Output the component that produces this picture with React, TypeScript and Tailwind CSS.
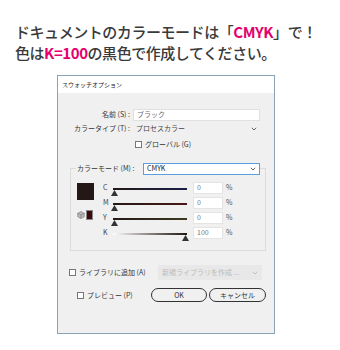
const jp = { fontFamily: '"Noto Sans CJK JP", "Noto Sans", sans-serif' };

const Check = () => (
  <span className="inline-block w-[7px] h-[7px] border border-[#777] bg-white mr-[3px]" />
);

const Chevron = ({ color = "#555" }: { color?: string }) => (
  <svg width="6" height="4" viewBox="0 0 6 4" className="shrink-0">
    <path d="M0.8 0.8 L3 3 L5.2 0.8" fill="none" stroke={color} strokeWidth="0.9" />
  </svg>
);

const Thumb = () => (
  <svg width="7" height="6" viewBox="0 0 7 6">
    <path d="M3.5 0 L7 6 L0 6 Z" fill="#333" />
  </svg>
);

const sliders = [
  { k: "C", v: "0", track: "bg-gradient-to-r from-[#231815] to-[#1b1f4a]", right: false },
  { k: "M", v: "0", track: "bg-gradient-to-r from-[#231815] to-[#4a1518]", right: false },
  { k: "Y", v: "0", track: "bg-gradient-to-r from-[#231815] to-[#3d3a22]", right: false },
  { k: "K", v: "100", track: "bg-gradient-to-r from-[#ffffff] to-[#231815]", right: true },
];

export default function App() {
  return (
    <div className="w-[340px] h-[350px] bg-white overflow-hidden" style={jp}>
      <div className="pt-[21px] pl-[15px] text-[15px] leading-[21px] font-medium text-[#3a3a3a] tracking-[-0.45px]">
        <div>
          ドキュメントのカラーモードは「<span className="text-[#e5006e] font-bold">CMYK</span>」で！
        </div>
        <div>
          色は<span className="text-[#e5006e] font-bold">K=100</span>の黒色で作成してください。
        </div>
      </div>

      <div className="ml-[57px] mt-[12px] w-[218px] h-[259px] border border-[#8aa3b5] bg-[#f0f0f0] text-[7px] text-[#333]">
        <div className="h-[17px] bg-white flex items-center px-[4px] text-[6px] text-[#222]">
          スウォッチオプション
        </div>

        <div className="pt-[15px]">
          <div className="flex items-center h-[13px]">
            <div className="w-[75px] text-right pr-[3px]">名前 (S) :</div>
            <div className="w-[127px] h-[12px] bg-white border border-[#e0e0e0] flex items-center px-[3px] text-[#666]">
              ブラック
            </div>
          </div>
          <div className="flex items-center h-[13px] mt-[1px]">
            <div className="w-[75px] text-right pr-[3px]">カラータイプ (T) :</div>
            <div className="w-[127px] h-[12px] flex items-center justify-between px-[3px] text-[#444]">
              <span>プロセスカラー</span>
              <Chevron />
            </div>
          </div>
          <div className="flex items-center h-[13px] mt-[3px] pl-[77px]">
            <Check />
            <span>グローバル (G)</span>
          </div>

          <div className="ml-[12px] mt-[17px] w-[196px] h-[83px] border border-[#dcdcdc]">
            <div className="flex items-center h-[13px] -mt-[7px] pl-[5px]">
              <div className="bg-[#f0f0f0] pr-[3px] pl-[1px] w-[67px]">カラーモード (M) :</div>
              <div className="w-[117px] h-[12px] bg-white border border-[#5a9ee0] flex items-center justify-between px-[3px]">
                <span className="text-[#222]">CMYK</span>
                <Chevron />
              </div>
            </div>

            <div className="flex mt-[1px]">
              <div className="w-[30px] pl-[6px] flex flex-col">
                <div className="w-[17px] h-[17px] bg-[#231815] mt-[7px]" />
                <div className="flex items-center mt-[10px]">
                  <svg width="8" height="8" viewBox="0 0 8 8" className="mr-[1px]">
                    <path d="M4 0.5 L7.3 2.3 L7.3 5.7 L4 7.5 L0.7 5.7 L0.7 2.3 Z" fill="#bbb" stroke="#777" strokeWidth="0.6" />
                    <path d="M0.7 2.3 L4 4 L7.3 2.3 M4 4 L4 7.5" fill="none" stroke="#777" strokeWidth="0.6" />
                  </svg>
                  <div className="w-[7px] h-[10px] bg-[#3b0a0c] border border-[#888]" />
                </div>
              </div>
              <div className="flex flex-col pt-[4px]">
                {sliders.map((s) => (
                  <div key={s.k} className="flex items-center h-[15px]">
                    <span className="w-[10px] pl-[2px] text-[#444]">{s.k}</span>
                    <div className={`relative w-[78px] h-[12px] flex items-center ${s.right ? "justify-end" : ""}`}>
                      <div className={`absolute left-[2px] right-[2px] top-[6px] h-[2px] ${s.track}`} />
                      <div className="relative mt-[10px]">
                        <Thumb />
                      </div>
                    </div>
                    <div className="ml-[4px] w-[30px] h-[12px] bg-white border border-[#e4e4e4] flex items-center px-[3px] text-[#777]">
                      {s.v}
                    </div>
                    <span className="ml-[3px] text-[#555]">%</span>
                  </div>
                ))}
              </div>
            </div>
          </div>

          <div className="flex items-center mt-[14px] pl-[11px] h-[15px]">
            <Check />
            <span className="w-[79px]">ライブラリに追加 (A)</span>
            <div className="w-[104px] h-[15px] bg-[#e8e8e8] flex items-center justify-between px-[4px] text-[#bbb]">
              <span>新規ライブラリを作成 ...</span>
              <Chevron color="#bbb" />
            </div>
          </div>

          <div className="flex items-center mt-[8px] h-[14px]">
            <div className="flex items-center pl-[19px] w-[93px]">
              <Check />
              <span>プレビュー (P)</span>
            </div>
            <div className="w-[56px] h-[14px] rounded-full border border-[#333] flex items-center justify-center">
              OK
            </div>
            <div className="ml-[2px] w-[57px] h-[14px] rounded-full border border-[#333] flex items-center justify-center">
              キャンセル
            </div>
          </div>
        </div>
      </div>
    </div>
  );
}
